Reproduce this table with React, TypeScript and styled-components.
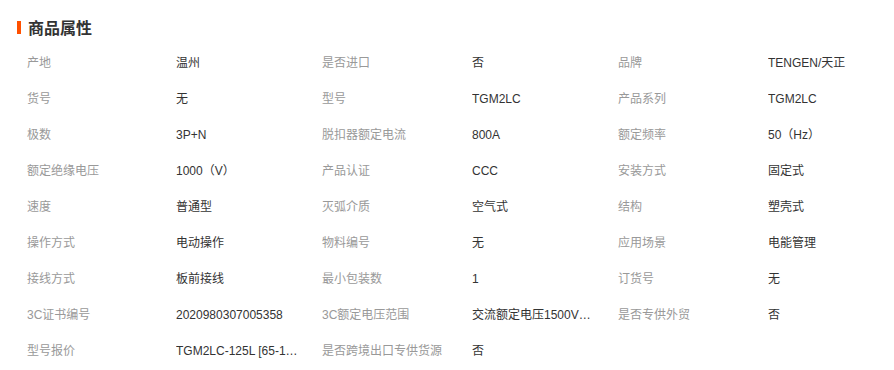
import React from "react";
import styled, { createGlobalStyle } from "styled-components";

const attrs: [string, string][] = [
  ["产地", "温州"],
  ["是否进口", "否"],
  ["品牌", "TENGEN/天正"],
  ["货号", "无"],
  ["型号", "TGM2LC"],
  ["产品系列", "TGM2LC"],
  ["极数", "3P+N"],
  ["脱扣器额定电流", "800A"],
  ["额定频率", "50（Hz）"],
  ["额定绝缘电压", "1000（V）"],
  ["产品认证", "CCC"],
  ["安装方式", "固定式"],
  ["速度", "普通型"],
  ["灭弧介质", "空气式"],
  ["结构", "塑壳式"],
  ["操作方式", "电动操作"],
  ["物料编号", "无"],
  ["应用场景", "电能管理"],
  ["接线方式", "板前接线"],
  ["最小包装数", "1"],
  ["订货号", "无"],
  ["3C证书编号", "2020980307005358"],
  ["3C额定电压范围", "交流额定电压1500V及以下"],
  ["是否专供外贸", "否"],
  ["型号报价", "TGM2LC-125L [65-125A] 3P+N 电动操作"],
  ["是否跨境出口专供货源", "否"],
];

const App = () => {
  return (
    <Wrap>
      <GlobalStyle />
      <Title>
        <Bar />
        商品属性
      </Title>
      <Grid>
        {attrs.map(([k, v]) => (
          <React.Fragment key={k}>
            <Label>{k}</Label>
            <Value>{v}</Value>
          </React.Fragment>
        ))}
      </Grid>
    </Wrap>
  );
};

export default App;

const GlobalStyle = createGlobalStyle`
body {
  margin: 0;
  background: #fff;
  overflow: hidden;
  font-family: "Liberation Sans", Arial, "Noto Sans CJK SC", sans-serif;
}
`;

const Wrap = styled.div`
width: 894px;
padding-top: 15px;
`;

const Title = styled.h3`
display: flex;
align-items: center;
gap: 7px;
margin: 0 0 6px 17px;
height: 24px;
font-size: 16px;
font-weight: bold;
color: #333;
`;

const Bar = styled.span`
width: 4px;
height: 13px;
background: #ff5000;
`;

const Grid = styled.div`
display: grid;
grid-template-columns: 149px 146px 150px 146px 150px auto;
grid-auto-rows: 36px;
padding-left: 27px;
font-size: 12px;
line-height: 36px;
`;

const Label = styled.div`
color: #999;
white-space: nowrap;
`;

const Value = styled.div`
color: #333;
max-width: 126px;
white-space: nowrap;
overflow: hidden;
text-overflow: ellipsis;
`;
